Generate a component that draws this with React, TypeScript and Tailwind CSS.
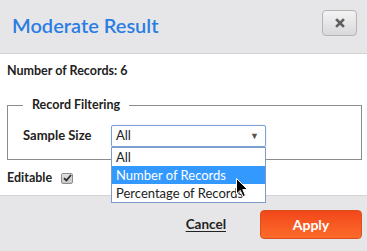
import React from 'react'

function CloseIcon() {
  return (
    <svg width="10" height="10" viewBox="0 0 10 10">
      <path d="M2 2 L8 8 M8 2 L2 8" stroke="#5f5f5f" strokeWidth="2.6" strokeLinecap="square" />
    </svg>
  )
}

function Cursor() {
  return (
    <svg width="13" height="20" viewBox="0 0 13 20" className="absolute left-[236px] top-[178px]">
      <path d="M0.5 0.5 L0.5 16 L4.3 12.4 L7 18.6 L9.4 17.6 L6.8 11.6 L11.6 11.6 Z" fill="#000" stroke="#fff" strokeWidth="1" strokeLinejoin="miter" />
    </svg>
  )
}

export default function App() {
  const options = ["All", "Number of Records", "Percentage of Records"]
  const selected = 1

  return (
    <div className="relative w-[367px] h-[251px] overflow-hidden bg-white font-['Lato','Open_Sans',sans-serif] text-[#222]">
      {/* header */}
      <div className="h-[54px] bg-[#e6e6e9] border-b border-[#d3d3d6] flex items-start justify-between pl-[12px] pr-[10px]">
        <h1 className="mt-[13px] text-[20px] leading-[24px] font-semibold text-[#2b7de3]">Moderate Result</h1>
        <button className="mt-[10px] w-[35px] h-[26px] rounded-[4px] border border-[#b4b4b6] bg-gradient-to-b from-[#f3f3f4] to-[#d9d9db] flex items-center justify-center">
          <CloseIcon />
        </button>
      </div>

      {/* body */}
      <div className="h-[141px] pt-[9px]">
        <p className="pl-[7px] text-[12.5px] leading-[16px] font-bold">Number of Records: 6</p>

        <fieldset className="mt-[18px] ml-[7px] mr-[5px] border border-[#8c8c8c] pl-[15px] pb-[12px] pt-[12px]">
          <legend className="px-[9px] text-[12.5px] leading-[16px] font-bold">Record Filtering</legend>
          <div className="flex items-center">
            <span className="w-[88px] text-[13px] font-bold">Sample Size</span>
            <div className="w-[155px] h-[22px] border border-[#7b9fd9] rounded-[2px] flex items-center justify-between pl-[4px] pr-[6px] text-[13px] shadow-[0_0_1px_#9fbbe8]">
              <span>All</span>
              <span className="text-[9px] text-[#555]">▼</span>
            </div>
          </div>
        </fieldset>

        <div className="mt-[10px] pl-[7px] flex items-center gap-[9px]">
          <span className="text-[12.5px] leading-[16px] font-bold">Editable</span>
          <div className="w-[12px] h-[11px] rounded-[2px] border border-[#8d8d8d] bg-gradient-to-b from-[#e2e2e2] to-[#c8c8c8] flex items-center justify-center">
            <svg width="9" height="8" viewBox="0 0 9 8">
              <path d="M1 4.2 L3.4 6.5 L8 1" stroke="#2a2a2a" strokeWidth="1.8" fill="none" />
            </svg>
          </div>
        </div>
      </div>

      {/* footer */}
      <div className="h-[56px] bg-[#e6e6e9] border-t border-[#d3d3d6] flex items-start justify-end pr-[5px] pt-[14px] gap-[34px]">
        <button className="mt-[6px] text-[13.5px] leading-[16px] font-bold underline underline-offset-2 text-[#222]">Cancel</button>
        <button className="w-[102px] h-[29px] rounded-[4px] border border-[#d9501c] bg-gradient-to-b from-[#f2461a] to-[#fd6b2a] text-white text-[14px] font-bold">Apply</button>
      </div>

      {/* open dropdown */}
      <div className="absolute left-[111px] top-[147px] w-[155px] border border-[#7f9cc7] bg-white text-[13px]">
        {options.map((o, i) => (
          <div key={o} className={`h-[18px] leading-[18px] pl-[4px] ${i === selected ? 'bg-[#3399ff] text-white' : 'text-[#222]'}`}>{o}</div>
        ))}
      </div>

      <Cursor />
    </div>
  )
}
